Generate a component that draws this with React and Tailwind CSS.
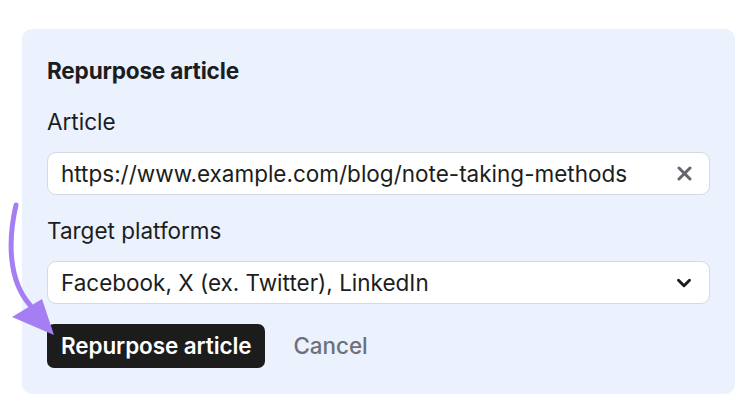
import { ChevronDown } from "lucide-react";

const App = () => {
  return (
    <main className="relative w-[750px] h-[412px] bg-white font-['Inter',sans-serif] text-[#1b1d21] overflow-hidden pt-[29px] pl-[22px] pr-[15px]">
      <section className="bg-[#ebf1fd] rounded-[10px] h-[365px] pt-[24px] px-[25px] flex flex-col">
        <h1 className="text-[22.6px] font-bold leading-[36px] tracking-[-0.2px]">Repurpose article</h1>
        <label className="mt-[19px] text-[22.5px] leading-[28px]">Article</label>
        <div className="mt-[16px] h-[43px] bg-white border border-[#d6d9df] rounded-[9px] flex items-center pl-[13px] pr-[17px]">
          <span className="flex-1 text-[22.5px]">https://www.example.com/blog/note-taking-methods</span>
          <svg width="15" height="15" viewBox="0 0 15 15" className="text-[#63666c]">
            <path d="M2 2 L13 13 M13 2 L2 13" stroke="currentColor" strokeWidth="3" strokeLinecap="round" />
          </svg>
        </div>
        <label className="mt-[22px] text-[22.5px] leading-[28px]">Target platforms</label>
        <div className="mt-[16px] h-[43px] bg-white border border-[#d6d9df] rounded-[9px] flex items-center pl-[13px] pr-[14px]">
          <span className="flex-1 text-[22.5px]">Facebook, X (ex. Twitter), LinkedIn</span>
          <ChevronDown size={22} strokeWidth={3.2} className="text-[#1b1d21]" />
        </div>
        <div className="mt-[20px] flex items-center gap-[28px]">
          <button className="h-[44px] px-[14px] bg-[#1b1c1b] text-white rounded-[7px] text-[22.5px] font-semibold tracking-[-0.1px]">
            Repurpose article
          </button>
          <button className="text-[22.4px] font-medium text-[#6b7079]">Cancel</button>
        </div>
      </section>
      <svg className="absolute left-0 top-[195px]" width="70" height="150" viewBox="0 0 70 150">
        <path d="M16 10 C 8 45, 8 85, 30 110" fill="none" stroke="#a47ef2" strokeWidth="5" strokeLinecap="round" />
        <polygon points="12,122 42,104 54,140" fill="#a47ef2" />
      </svg>
    </main>
  );
};

export default App;
